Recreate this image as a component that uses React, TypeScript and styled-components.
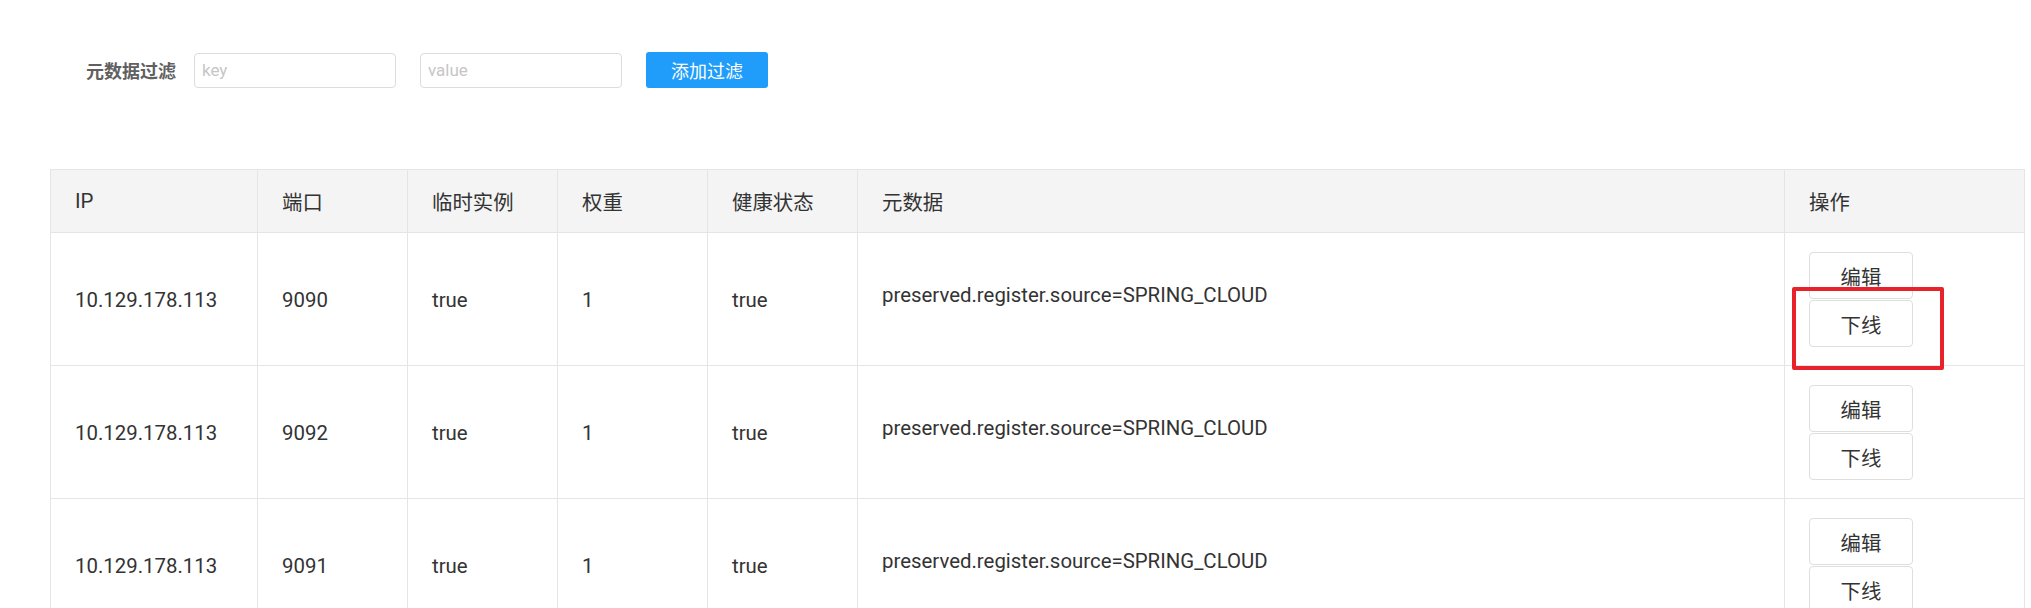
import React from 'react';
import styled, { createGlobalStyle } from 'styled-components';

interface IInstance {
	ip: string;
	port: number;
	ephemeral: boolean;
	weight: number;
	healthy: boolean;
	metadata: string;
}

const instances: IInstance[] = [
	{ ip: '10.129.178.113', port: 9090, ephemeral: true, weight: 1, healthy: true, metadata: 'preserved.register.source=SPRING_CLOUD' },
	{ ip: '10.129.178.113', port: 9092, ephemeral: true, weight: 1, healthy: true, metadata: 'preserved.register.source=SPRING_CLOUD' },
	{ ip: '10.129.178.113', port: 9091, ephemeral: true, weight: 1, healthy: true, metadata: 'preserved.register.source=SPRING_CLOUD' },
];

const columns = [
	{ title: 'IP', width: 207 },
	{ title: '端口', width: 150 },
	{ title: '临时实例', width: 150 },
	{ title: '权重', width: 150 },
	{ title: '健康状态', width: 150 },
	{ title: '元数据', width: 927 },
	{ title: '操作', width: 240 },
];

const GlobalStyle = createGlobalStyle`
	html, body {
		margin: 0;
		padding: 0;
		background: #fff;
		overflow: hidden;
	}
	body {
		font-family: Roboto, "Noto Sans CJK SC", sans-serif;
		color: #333;
	}
`;

const Page = styled.div`
	width: 2031px;
	height: 608px;
	padding: 52px 0 0 50px;
	box-sizing: border-box;
`;

const FilterBar = styled.div`
	display: flex;
	align-items: center;
	padding-left: 36px;
	height: 36px;
`;

const FilterLabel = styled.span`
	font-size: 18px;
	font-weight: 700;
	color: #606060;
	margin-right: 18px;
	white-space: nowrap;
`;

const FilterInput = styled.input`
	width: 202px;
	height: 35px;
	box-sizing: border-box;
	border: 1px solid #dcdcdc;
	border-radius: 4px;
	padding: 0 7px;
	margin-right: 24px;
	font-family: Roboto, "Noto Sans CJK SC", sans-serif;
	font-size: 17px;
	color: #333;
	outline: none;

	&::placeholder {
		color: #c6c6c6;
	}
`;

const PrimaryButton = styled.button`
	width: 122px;
	height: 36px;
	border: none;
	border-radius: 3px;
	background: #209dfa;
	color: #fff;
	font-family: Roboto, "Noto Sans CJK SC", sans-serif;
	font-size: 18px;
	cursor: pointer;
`;

const Table = styled.table`
	margin-top: 81px;
	border-collapse: collapse;
	table-layout: fixed;
	width: 1974px;
	font-size: 20.4px;
	color: #333;
`;

const HeadCell = styled.th`
	height: 63px;
	padding: 0 24px;
	background: #f4f4f4;
	border: 1px solid #e5e5e5;
	font-weight: 400;
	text-align: left;
	box-sizing: border-box;
`;

const Cell = styled.td<{ $raise?: boolean }>`
	padding: 19px 24px 18px;
	border: 1px solid #e5e5e5;
	vertical-align: middle;
	white-space: nowrap;

	& > span {
		display: inline-block;
		padding-bottom: ${(p) => (p.$raise ? '10px' : '0')};
	}
`;

const Actions = styled.div`
	position: relative;
	display: flex;
	flex-direction: column;
	gap: 1px;
	width: 104px;
`;

const ActionButton = styled.button`
	width: 104px;
	height: 47px;
	background: #fff;
	border: 1px solid #dedede;
	border-radius: 4px;
	font-family: Roboto, "Noto Sans CJK SC", sans-serif;
	font-size: 20.4px;
	color: #333;
	cursor: pointer;
`;

const Highlight = styled.div`
	position: absolute;
	left: -17px;
	top: 35px;
	width: 152px;
	height: 83px;
	box-sizing: border-box;
	border: 4px solid #e8222a;
	border-radius: 2px;
	pointer-events: none;
`;

export default function App() {
	return (
		<Page>
			<GlobalStyle />
			<FilterBar>
				<FilterLabel>元数据过滤</FilterLabel>
				<FilterInput placeholder="key" />
				<FilterInput placeholder="value" />
				<PrimaryButton>添加过滤</PrimaryButton>
			</FilterBar>
			<Table>
				<colgroup>
					{columns.map((c) => (
						<col key={c.title} style={{ width: c.width }} />
					))}
				</colgroup>
				<thead>
					<tr>
						{columns.map((c) => (
							<HeadCell key={c.title}>{c.title}</HeadCell>
						))}
					</tr>
				</thead>
				<tbody>
					{instances.map((item, i) => (
						<tr key={item.port}>
							<Cell>{item.ip}</Cell>
							<Cell>{item.port}</Cell>
							<Cell>{String(item.ephemeral)}</Cell>
							<Cell>{item.weight}</Cell>
							<Cell>{String(item.healthy)}</Cell>
							<Cell $raise>
								<span>{item.metadata}</span>
							</Cell>
							<Cell>
								<Actions>
									<ActionButton>编辑</ActionButton>
									<ActionButton>下线</ActionButton>
									{i === 0 && <Highlight />}
								</Actions>
							</Cell>
						</tr>
					))}
				</tbody>
			</Table>
		</Page>
	);
}
